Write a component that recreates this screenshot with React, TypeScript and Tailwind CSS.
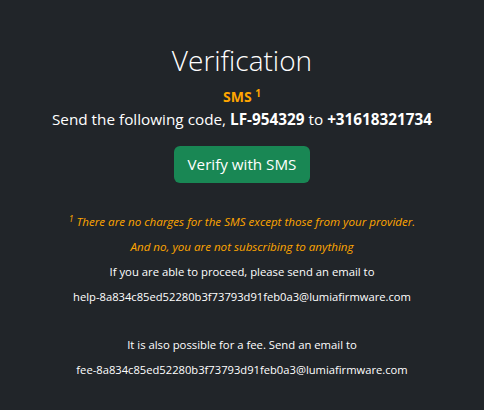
export default function App() {
  return (
    <div className="min-h-[410px] w-full bg-[#212529] text-white font-['Open_Sans',sans-serif] text-center pt-[40px]">
      <h1 className="text-[28px] leading-[40px] font-light">Verification</h1>
      <div className="mt-[7px] text-[14px] leading-[20px] font-bold text-[#ffa500]">
        SMS <sup className="text-[10px]">1</sup>
      </div>
      <p className="text-[15.3px] leading-[24px]">
        Send the following code, <b>LF-954329</b> to <b>+31618321734</b>
      </p>
      <button className="mt-[15px] h-[37px] w-[136px] rounded-[6px] bg-[#198754] text-[15.2px] text-white">
        Verify with SMS
      </button>
      <div className="mt-[26px] text-[11.3px] leading-[25px]">
        <p className="italic text-[11.6px] text-[#ffa500]">
          <sup>1</sup> There are no charges for the SMS except those from your provider.
        </p>
        <p className="italic text-[11.6px] text-[#ffa500]">And no, you are not subscribing to anything</p>
        <p>If you are able to proceed, please send an email to</p>
        <p className="text-[11.2px]">help-8a834c85ed52280b3f73793d91feb0a3@lumiafirmware.com</p>
        <p className="mt-[23px]">It is also possible for a fee. Send an email to</p>
        <p className="text-[11.2px]">fee-8a834c85ed52280b3f73793d91feb0a3@lumiafirmware.com</p>
      </div>
    </div>
  );
}
